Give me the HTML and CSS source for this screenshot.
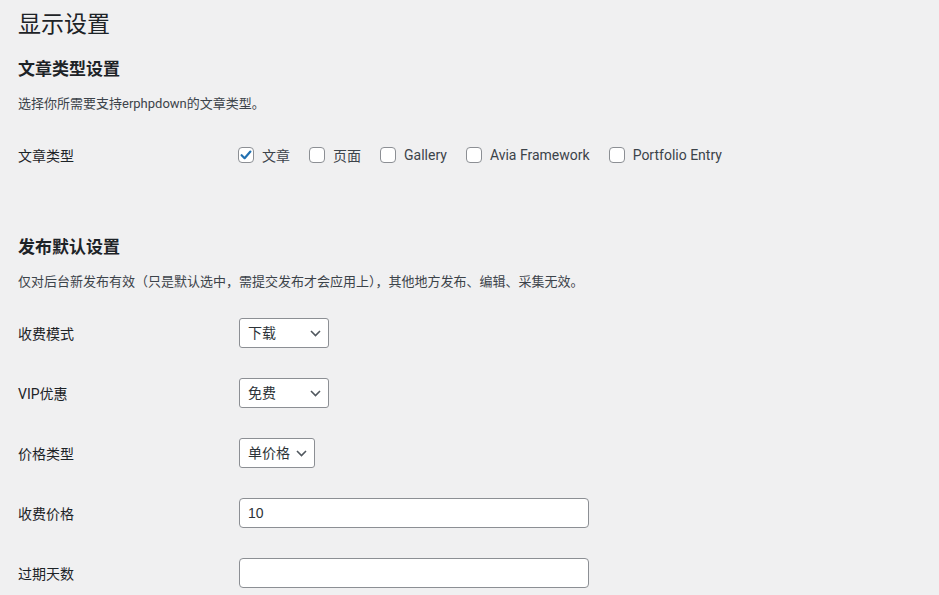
FILE: index.html
```html
<!DOCTYPE html>
<html lang="zh-CN">
  <head>
    <meta charset="UTF-8" />
    <title>显示设置</title>
    <link rel="stylesheet" href="styles.css">
  </head>
  <body>
    <div class="wrap">
      <h1>显示设置</h1>

      <h2 class="section-title">文章类型设置</h2>
      <p class="desc">选择你所需要支持erphpdown的文章类型。</p>

      <div class="form-row">
        <div class="form-label">文章类型</div>
        <div class="form-field checks">
          <label class="check"><span class="box checked"><svg viewBox="0 0 16 16" width="16" height="16"><path d="M3.6 8.2 L6.6 11.2 L12.4 4.6" fill="none" stroke="#2271b1" stroke-width="2.2" stroke-linecap="round" stroke-linejoin="round"/></svg></span>文章</label>
          <label class="check"><span class="box"></span>页面</label>
          <label class="check"><span class="box"></span>Gallery</label>
          <label class="check"><span class="box"></span>Avia Framework</label>
          <label class="check"><span class="box"></span>Portfolio Entry</label>
        </div>
      </div>

      <h2 class="section-title second">发布默认设置</h2>
      <p class="desc">仅对后台新发布有效（只是默认选中，需提交发布才会应用上），其他地方发布、编辑、采集无效。</p>

      <div class="form-rows">
        <div class="form-row">
          <div class="form-label">收费模式</div>
          <div class="form-field">
            <select class="select">
              <option>下载</option>
              <option>付费查看</option>
            </select>
          </div>
        </div>
        <div class="form-row">
          <div class="form-label">VIP优惠</div>
          <div class="form-field">
            <select class="select">
              <option>免费</option>
              <option>会员五折</option>
            </select>
          </div>
        </div>
        <div class="form-row">
          <div class="form-label">价格类型</div>
          <div class="form-field">
            <select class="select">
              <option>单价格</option>
              <option>多价格</option>
            </select>
          </div>
        </div>
        <div class="form-row">
          <div class="form-label">收费价格</div>
          <div class="form-field">
            <input class="text-input" type="text" value="10" />
          </div>
        </div>
        <div class="form-row">
          <div class="form-label">过期天数</div>
          <div class="form-field">
            <input class="text-input" type="text" value="" />
          </div>
        </div>
      </div>
    </div>
  </body>
</html>
```

FILE: styles.css
```css
body {
  margin: 0;
  background-color: #f0f0f1;
  color: #1d2327;
  font-family: Roboto, "Noto Sans CJK SC", sans-serif;
  font-size: 13px;
}

.wrap {
  padding: 10px 0 0 18px;
}

h1 {
  margin: 0;
  font-size: 23px;
  font-weight: 400;
  line-height: 30px;
  color: #1d2327;
}

/* section headings */
.section-title {
  margin: 18px 0 0;
  font-size: 17px;
  font-weight: 700;
  line-height: 22px;
}
.section-title.second {
  margin-top: 51px;
}

.desc {
  margin: 14px 0 0;
  font-size: 13px;
  line-height: 19px;
  color: #3c434a;
}

/* rows of the settings table */
.form-row {
  display: grid;
  grid-template-columns: 220px 1fr;
  align-items: center;
  height: 60px;
  margin-top: 12px;
  font-size: 14px;
}
.form-rows {
  margin-top: 12px;
}
.form-rows .form-row {
  margin-top: 0;
}

.form-label {
  color: #1d2327;
}

/* checkboxes */
.checks {
  display: flex;
  align-items: center;
  gap: 19px;
}
.check {
  display: flex;
  align-items: center;
  gap: 8px;
  color: #3c434a;
}
.box {
  width: 14px;
  height: 14px;
  border: 1px solid #8c8f94;
  border-radius: 4px;
  background: #fff;
  position: relative;
}
.box svg {
  position: absolute;
  left: -1px;
  top: -1px;
}

/* dropdowns */
.select {
  appearance: none;
  -webkit-appearance: none;
  height: 30px;
  margin-left: 1px;
  padding: 0 24px 0 8px;
  border: 1px solid #8c8f94;
  border-radius: 3px;
  background: #fff url("data:image/svg+xml;utf8,<svg xmlns='http://www.w3.org/2000/svg' width='11' height='7' viewBox='0 0 11 7'><path d='M1 1 L5.5 5.5 L10 1' fill='none' stroke='%2350575e' stroke-width='1.6'/></svg>") no-repeat right 7px center;
  font-family: Roboto, "Noto Sans CJK SC", sans-serif;
  font-size: 14px;
  color: #2c3338;
}

/* text inputs */
.text-input {
  box-sizing: border-box;
  width: 350px;
  height: 30px;
  margin-left: 1px;
  padding: 0 8px;
  border: 1px solid #8c8f94;
  border-radius: 4px;
  background: #fff;
  font-family: "Liberation Sans", "Noto Sans CJK SC", sans-serif;
  font-size: 14px;
  color: #2c3338;
}
```
